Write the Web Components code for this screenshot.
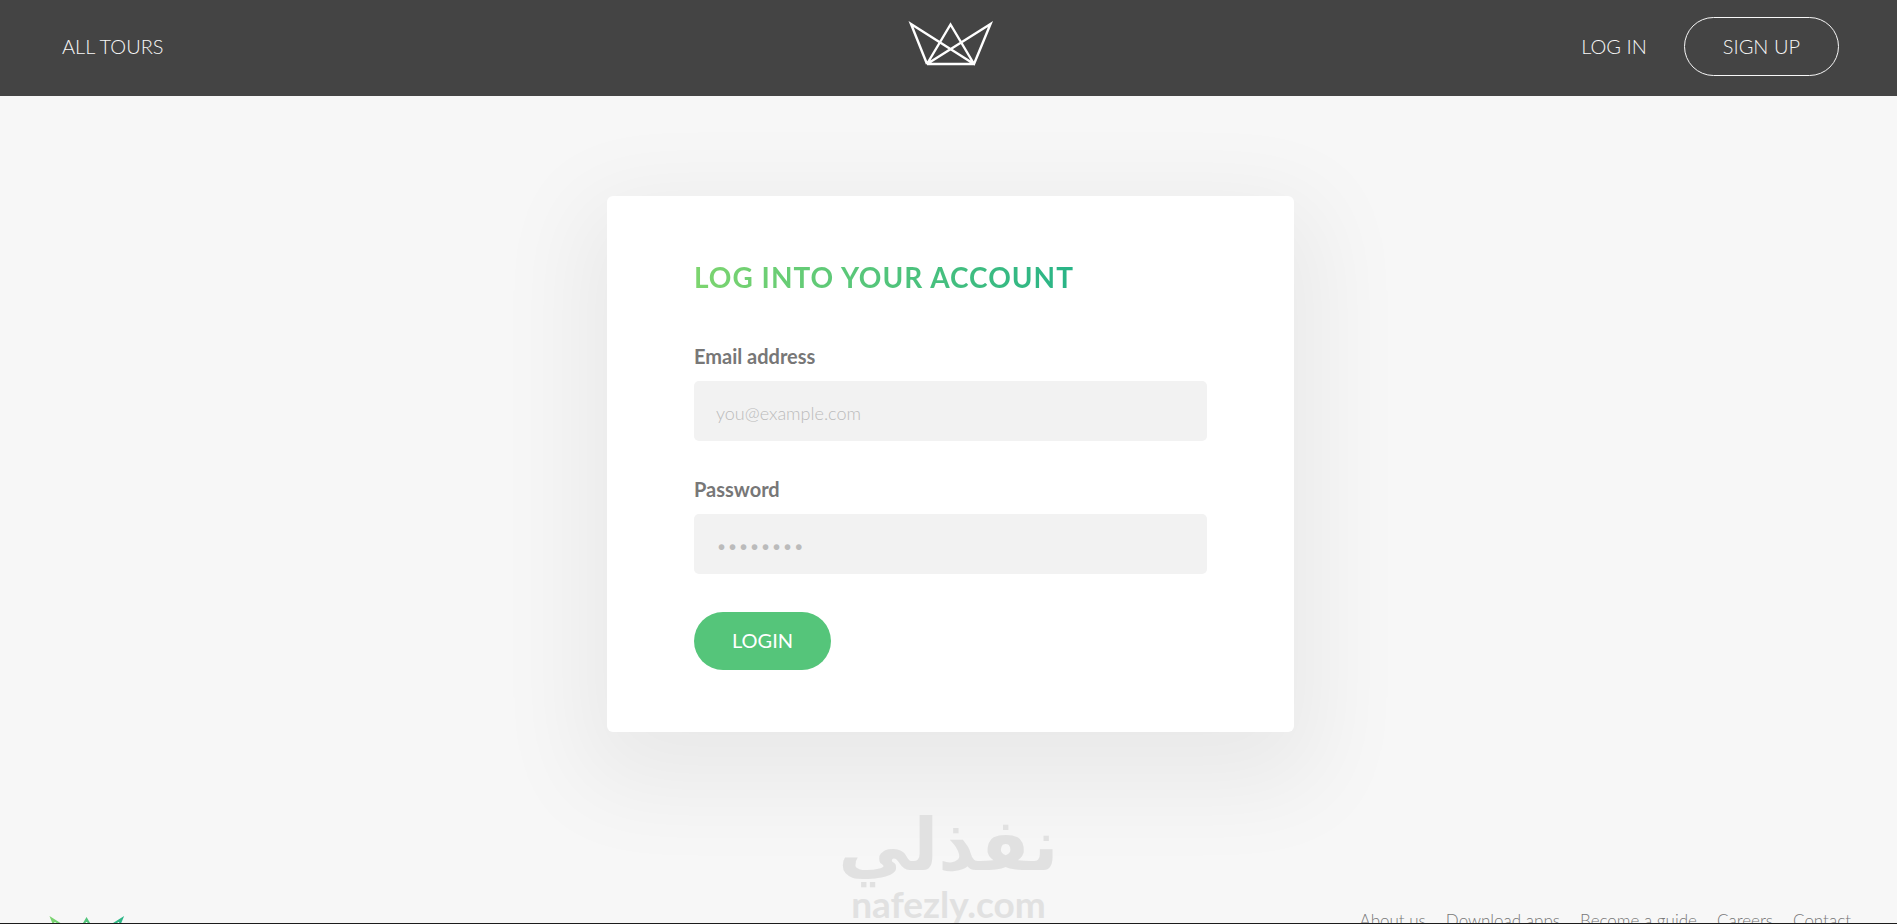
<!DOCTYPE html>
<html lang="en">
<head>
<meta charset="utf-8">
<title>Log into your account</title>
<style>
  html, body { margin: 0; height: 100%; }
  body { font-family: Lato, "Open Sans", sans-serif; font-weight: 300; color: #777; background: #f7f7f7; overflow: hidden; }
</style>
</head>
<body>
<tour-page>
  <tour-header slot="header"></tour-header>
  <login-card heading="Log into your account">
    <form-field label="Email address" type="email" placeholder="you@example.com"></form-field>
    <form-field label="Password" type="password" placeholder="••••••••"></form-field>
  </login-card>
  <tour-footer slot="footer"></tour-footer>
  <site-watermark slot="overlay"></site-watermark>
</tour-page>

<script>
class CrownLogo extends HTMLElement {
  constructor() {
    super();
    const green = this.hasAttribute('green');
    this.attachShadow({ mode: 'open' }).innerHTML = `
      <style>
        :host { display: block; width: 86px; }
        :host([green]) { width: 76px; }
        svg { display: block; width: 100%; overflow: visible; }
      </style>
      <svg viewBox="0 0 86 46" aria-hidden="true">
        <defs><linearGradient id="g" gradientUnits="userSpaceOnUse" x1="0" y1="0" x2="86" y2="0">
          <stop offset="0" stop-color="#7dd56f"/><stop offset="1" stop-color="#28b487"/>
        </linearGradient></defs>
        <path d="M19 43 L3 3 L66 43 L82.500 3 M19 43 H66 M19 43 L42.500 3.500 L66 43 M19 43 L82.500 3 L66 43"
          fill="none" stroke="${green ? 'url(#g)' : '#fff'}" stroke-width="2.400"/>
      </svg>`;
  }
}
customElements.define('crown-logo', CrownLogo);

class TourPage extends HTMLElement {
  constructor() {
    super();
    this.attachShadow({ mode: 'open' }).innerHTML = `
      <style>
        :host { display: flex; flex-direction: column; position: relative; box-sizing: border-box;
          height: 100vh; overflow: hidden; border-bottom: 1px solid #1c1c1c; }
        main { padding: 100px 16px 100px 20px; flex: none; }
      </style>
      <slot name="header"></slot>
      <main><slot></slot></main>
      <slot name="footer"></slot>
      <slot name="overlay"></slot>`;
  }
}
customElements.define('tour-page', TourPage);

class TourHeader extends HTMLElement {
  constructor() {
    super();
    this.attachShadow({ mode: 'open' }).innerHTML = `
      <style>
        :host { display: block; flex: none; background: #444; }
        header { display: grid; grid-template-columns: 1fr auto 1fr; align-items: center;
          box-sizing: border-box; height: 96px; padding: 0 58px 4px 62px; font-size: 20px; line-height: 24px; }
        a { color: #f7f7f7; text-decoration: none; text-transform: uppercase; }
        crown-logo { margin-bottom: 4px; }
        nav { display: flex; align-items: center; }
        .end { justify-content: flex-end; gap: 37px; }
        .pill { border: 1px solid #f7f7f7; border-radius: 30px; padding: 16px 38px 17px; }
      </style>
      <header>
        <nav><a href="#tours">All tours</a></nav>
        <crown-logo></crown-logo>
        <nav class="end"><a href="#login">Log in</a><a class="pill" href="#signup">Sign up</a></nav>
      </header>`;
  }
}
customElements.define('tour-header', TourHeader);

class LoginCard extends HTMLElement {
  constructor() {
    super();
    this.attachShadow({ mode: 'open' }).innerHTML = `
      <style>
        :host { display: block; box-sizing: border-box; max-width: 687px; margin: 0 auto; padding: 61px 87px 62px;
          background: #fff; border-radius: 6px; box-shadow: 0 30px 96px 24px rgba(0,0,0,.06); }
        h2 { display: table; margin: 0 0 47px; font-size: 28px; line-height: 40px; font-weight: 700;
          letter-spacing: 1px; text-transform: uppercase; color: transparent;
          background: linear-gradient(to right, #7dd56f, #28b487); -webkit-background-clip: text; background-clip: text; }
        form { display: flex; flex-direction: column; align-items: flex-start; }
        ::slotted(form-field) { margin-bottom: 36px; }
        ::slotted(form-field:last-child) { margin-bottom: 38px; }
        button { border: 0; border-radius: 30px; height: 58px; padding: 0 38px 3px; background: #55c57a; color: #fff;
          font: 400 20px/24px Lato, sans-serif; text-transform: uppercase; cursor: pointer; }
      </style>
      <h2></h2>
      <form><slot></slot><button type="button">Login</button></form>`;
    this.shadowRoot.querySelector('h2').textContent = this.getAttribute('heading');
  }
}

class FormField extends HTMLElement {
  constructor() {
    super();
    this.attachShadow({ mode: 'open' }).innerHTML = `
      <style>
        :host { display: block; width: 100%; }
        label { display: block; margin-bottom: 13px; font-size: 20px; line-height: 24px; font-weight: 700; color: #777; }
        input { display: block; box-sizing: border-box; width: 100%; height: 60px; padding: 3px 22px 0; border: 0;
          border-radius: 5px; background: #f2f2f2; color: #777; font: 300 18px/24px Lato, sans-serif; }
        input[type="password"] { font-size: 19px; }
        input::placeholder { color: #bbb; opacity: 1; }
      </style>
      <label for="field"></label><input id="field">`;
    this.shadowRoot.querySelector('label').textContent = this.getAttribute('label');
    const input = this.shadowRoot.querySelector('input');
    input.type = this.getAttribute('type');
    input.placeholder = this.getAttribute('placeholder');
  }
}
customElements.define('form-field', FormField);
customElements.define('login-card', LoginCard);

class TourFooter extends HTMLElement {
  constructor() {
    super();
    this.attachShadow({ mode: 'open' }).innerHTML = `
      <style>
        :host { display: block; flex: none; padding: 77px 46px 40px 49px; }
        footer { display: flex; justify-content: space-between; align-items: flex-start; }
        crown-logo { margin-top: 7px; }
        ul { display: flex; gap: 20px; margin: 0; padding: 0; list-style: none; font-size: 17px; line-height: 24px; }
        a { color: #777; text-decoration: none; }
      </style>
      <footer>
        <crown-logo green></crown-logo>
        <ul>
          <li><a href="#about">About us</a></li>
          <li><a href="#apps">Download apps</a></li>
          <li><a href="#guide">Become a guide</a></li>
          <li><a href="#careers">Careers</a></li>
          <li><a href="#contact">Contact</a></li>
        </ul>
      </footer>`;
  }
}
customElements.define('tour-footer', TourFooter);

class SiteWatermark extends HTMLElement {
  constructor() {
    super();
    this.attachShadow({ mode: 'open' }).innerHTML = `
      <style>
        :host { position: absolute; left: 0; right: 0; bottom: 0; display: flex; flex-direction: column;
          align-items: center; color: #e1e1e1; pointer-events: none; }
        .ar { font: 700 72px/80px "DejaVu Sans", sans-serif; }
        .en { font: 700 37px/38px Lato, sans-serif; }
      </style>
      <span class="ar" lang="ar" dir="rtl">نفذلي</span>
      <span class="en">nafezly.com</span>`;
  }
}
customElements.define('site-watermark', SiteWatermark);
</script>
</body>
</html>
